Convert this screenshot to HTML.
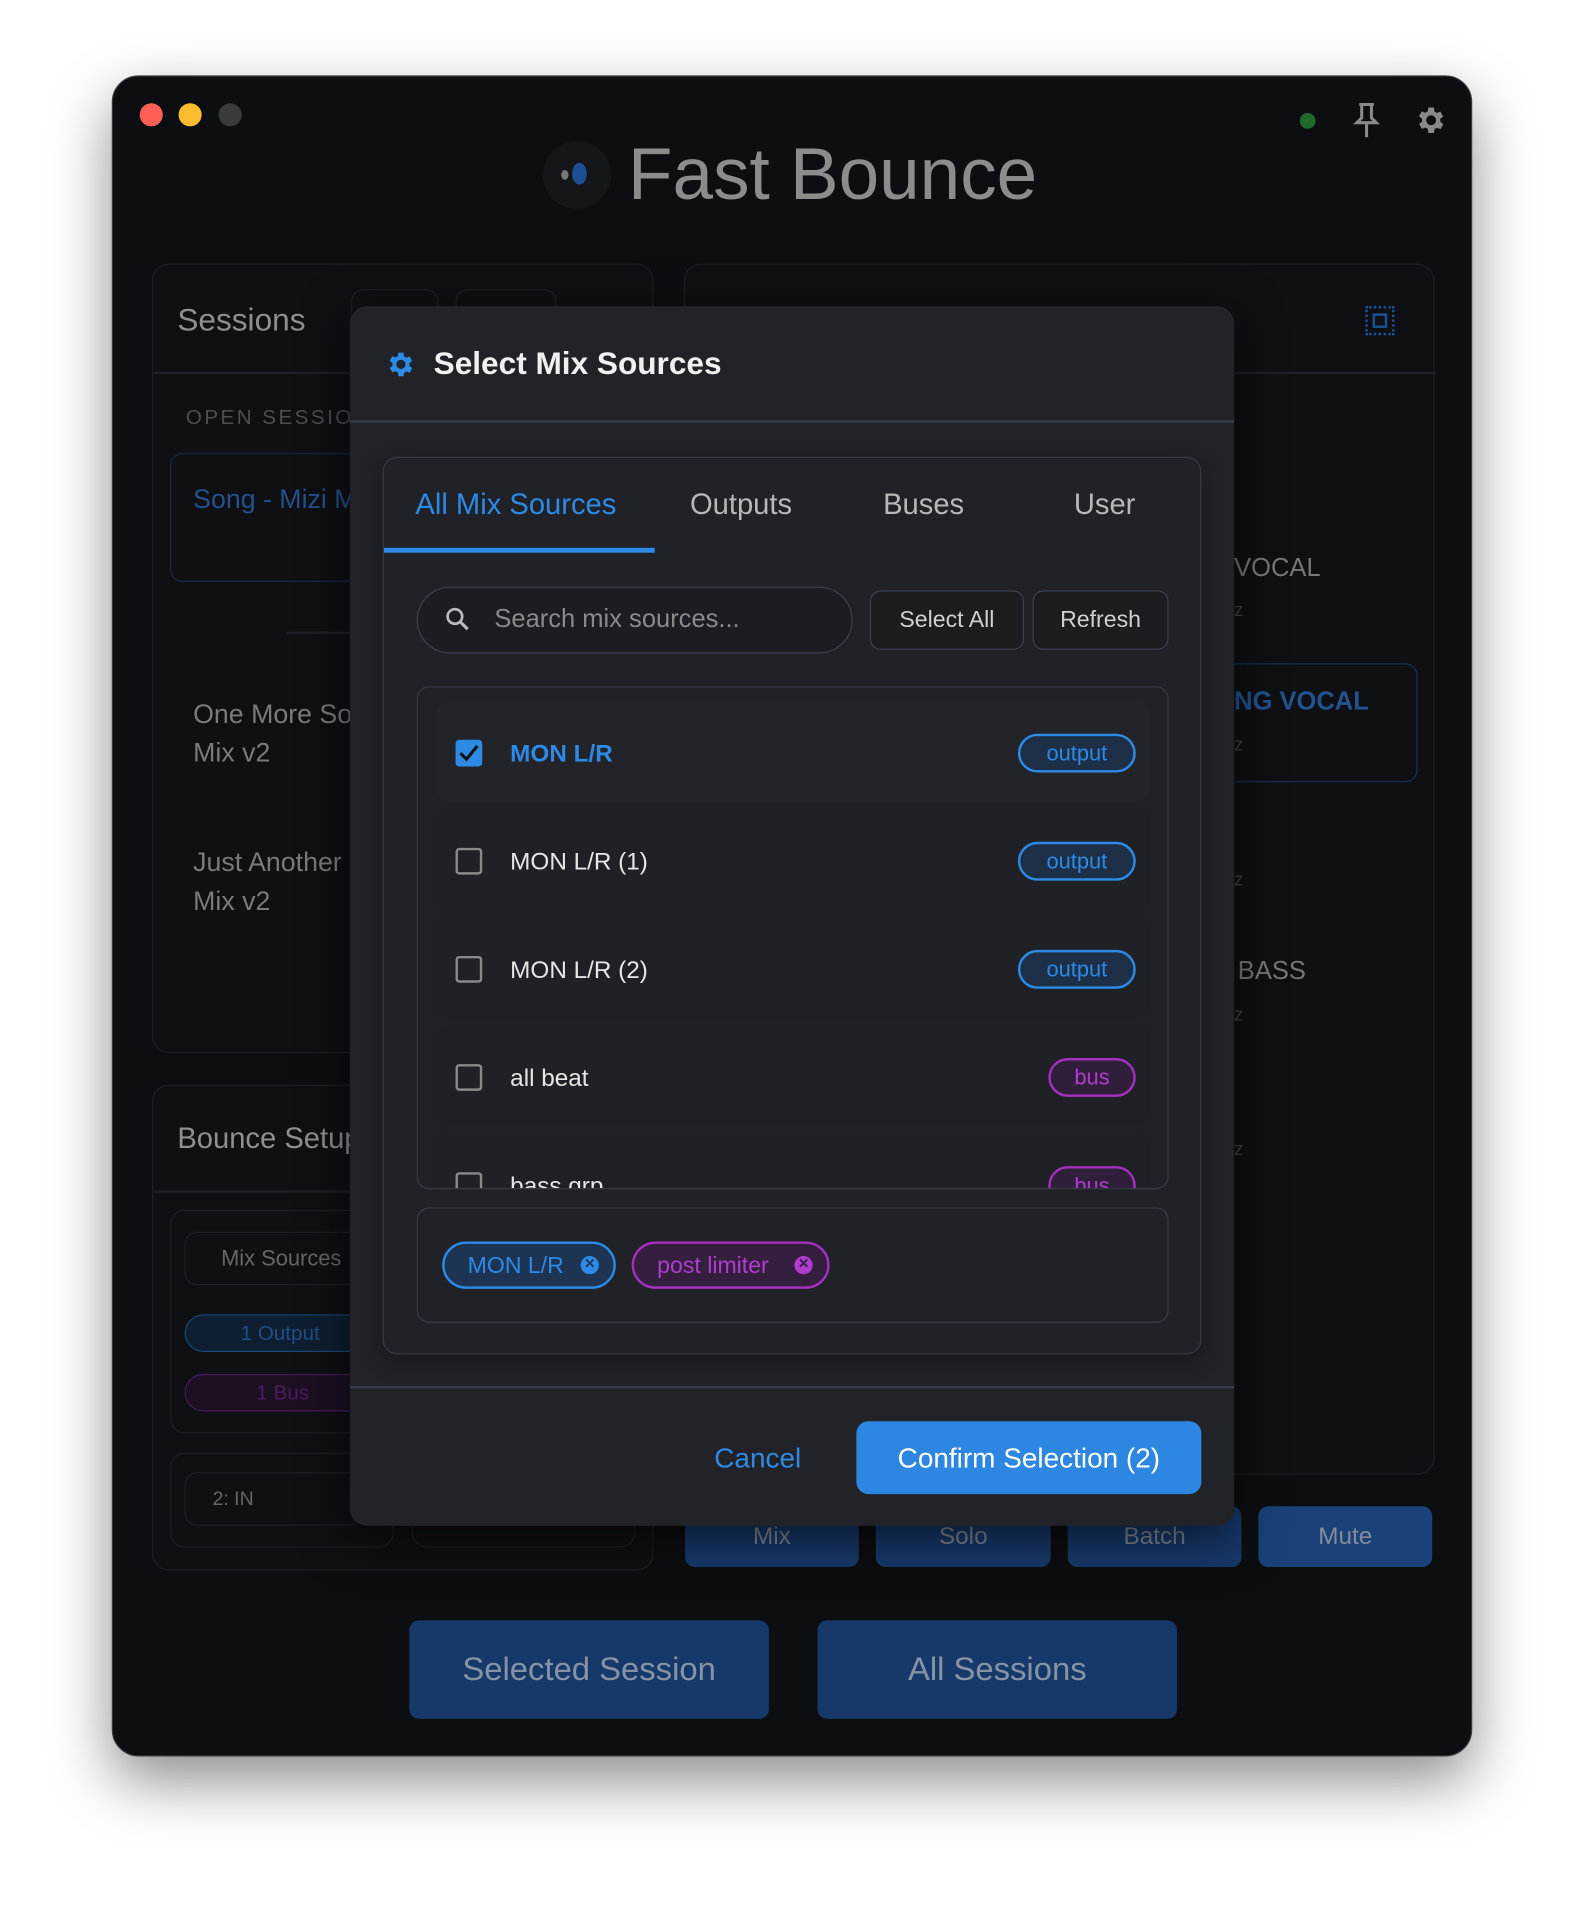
<!DOCTYPE html>
<html><head><meta charset="utf-8"><style>
*{box-sizing:border-box;margin:0;padding:0}
html,body{width:1584px;height:1904px;overflow:hidden;background:#fff;font-family:"Liberation Sans",sans-serif}
#w{position:absolute;left:0;top:0;width:1304px;height:1568px;transform:scale(1.21472);transform-origin:0 0;background:#fff}
.a{position:absolute}
.win{left:92px;top:62px;width:1120px;height:1384px;border-radius:22px;background:#0d0e11;border:1.5px solid #3a3a3c;box-shadow:0 20px 50px rgba(0,0,0,.45);overflow:hidden}
.dot{width:19px;height:19px;border-radius:50%}
.panel{border:1.5px solid #1d2026;border-radius:14px;background:#0f1014}
.t{color:#8a8a8a;white-space:nowrap}
.btn{background:#17396a;border-radius:8px;color:#7d8796;font-size:20px;display:flex;align-items:center;justify-content:center}
.modal{left:288px;top:252px;width:728px;height:1004px;background:#212329;border-radius:14px;box-shadow:0 10px 40px rgba(0,0,0,.6)}
.row{left:15px;width:588px;height:84px;background:#1f2126;border-radius:12px}
.cb{left:16px;width:22px;height:22px;border:2px solid #8a8a8a;border-radius:3px;top:33px}
.lbl{left:61px;top:34px;font-size:20px;color:#e6e6e6}
.pill{height:32px;border-radius:16px;font-size:18px;display:flex;align-items:center;justify-content:center;top:28px}
.out{border:2px solid #2d8ae6;color:#2d8ae6;background:#1e3048;width:97px;left:479px}
.bus{border:2px solid #a330c0;color:#b13cd0;background:#301f3a;width:72px;left:504px}
</style></head><body><div id="w">
<div class="a win">
 <div class="a dot" style="left:22px;top:22px;background:#fe5f57"></div>
 <div class="a dot" style="left:54px;top:22px;background:#febc2e"></div>
 <div class="a dot" style="left:87px;top:22px;background:#3a3b3d"></div>
 <div class="a dot" style="left:977px;top:30px;width:13px;height:13px;background:#1f6a2a"></div>
 <svg class="a" style="left:1020px;top:20px" width="24" height="32" viewBox="0 0 24 32"><path d="M6 3h12M8 3v11l-4 4h16l-4-4V3M12 18v12" stroke="#8a8a8a" stroke-width="2.5" fill="none"/></svg>
 <svg class="a" style="left:1070px;top:22px" width="28" height="28" viewBox="0 0 24 24"><path fill="#8a8a8a" d="M19.4 13a7.5 7.5 0 000-2l2.1-1.6-2-3.5-2.5 1a7 7 0 00-1.7-1L15 3h-4l-.4 2.7a7 7 0 00-1.7 1l-2.5-1-2 3.5L6.6 11a7.5 7.5 0 000 2l-2.1 1.6 2 3.5 2.5-1a7 7 0 001.7 1L11 21h4l.4-2.7a7 7 0 001.7-1l2.5 1 2-3.5zM13 15.5a3.5 3.5 0 110-7 3.5 3.5 0 010 7z"/></svg>
 <div class="a" style="left:354px;top:53px;width:56px;height:56px;border-radius:50%;background:#14161a"></div>
 <div class="a" style="left:378px;top:71px;width:12px;height:18px;border-radius:50%;background:#1d4f94"></div>
 <div class="a" style="left:369px;top:77px;width:6px;height:8px;border-radius:50%;background:#777"></div>
 <div class="a t" style="left:424px;top:46px;font-size:60px;color:#8c8c8c">Fast Bounce</div>

 <div class="a panel" style="left:32px;top:154px;width:413px;height:650px">
  <div class="a t" style="left:20px;top:30px;font-size:26px;color:#8f8f8f">Sessions</div>
  <div class="a" style="left:163px;top:20px;width:72px;height:60px;border:1.5px solid #1d2026;border-radius:10px"></div>
  <div class="a" style="left:249px;top:20px;width:83px;height:60px;border:1.5px solid #1d2026;border-radius:10px"></div>
  <div class="a" style="left:0;top:88px;width:413px;height:1.5px;background:#1d2026"></div>
  <div class="a t" style="left:27px;top:116px;font-size:17px;letter-spacing:2px;color:#4e4e52">OPEN SESSIONS</div>
  <div class="a" style="left:14px;top:155px;width:390px;height:106px;border:1.5px solid #162a45;border-radius:10px"></div>
  <div class="a t" style="left:33px;top:180px;font-size:22px;color:#24518a">Song - Mizi Mix</div>
  <div class="a" style="left:110px;top:302px;width:100px;height:1.5px;background:#1d2026"></div>
  <div class="a t" style="left:33px;top:354px;font-size:22px;line-height:32px;color:#7a7a7a">One More Song<br>Mix v2</div>
  <div class="a t" style="left:33px;top:476px;font-size:22px;line-height:32px;color:#7a7a7a">Just Another<br>Mix v2</div>
 </div>
 <div class="a panel" style="left:32px;top:830px;width:413px;height:400px">
  <div class="a t" style="left:20px;top:30px;font-size:24px;color:#8f8f8f">Bounce Setup</div>
  <div class="a" style="left:0;top:86px;width:413px;height:1.5px;background:#1d2026"></div>
  <div class="a" style="left:14px;top:102px;width:384px;height:184px;border:1.5px solid #1d2026;border-radius:12px"></div>
  <div class="a" style="left:26px;top:120px;width:180px;height:44px;border:1.5px solid #1d2026;border-radius:10px;color:#666;font-size:18px;padding:11px 0 0 29px">Mix Sources</div>
  <div class="a" style="left:26px;top:188px;width:180px;height:31px;border:1.5px solid #1b4878;border-radius:16px;background:#0f1e30;color:#1d4f85;font-size:17px;padding:5px 0 0 45px">1 Output</div>
  <div class="a" style="left:26px;top:237px;width:180px;height:31px;border:1.5px solid #4a1a5c;border-radius:16px;background:#1c1022;color:#4c1d5c;font-size:17px;padding:5px 0 0 58px">1 Bus</div>
  <div class="a" style="left:14px;top:302px;width:184px;height:78px;border:1.5px solid #1d2026;border-radius:12px"></div>
  <div class="a" style="left:213px;top:302px;width:184px;height:78px;border:1.5px solid #1d2026;border-radius:12px"></div>
  <div class="a" style="left:26px;top:318px;width:145px;height:44px;border:1.5px solid #1d2026;border-radius:10px;color:#666;font-size:16px;padding:13px 0 0 22px">2: IN</div>
 </div>
 <div class="a panel" style="left:470px;top:154px;width:618px;height:997px">
  <div class="a" style="left:0;top:88px;width:618px;height:1.5px;background:#1d2026"></div>
  <div class="a" style="left:560px;top:34px;width:24px;height:24px;border:2px dotted #1d4f94"></div>
  <div class="a" style="left:566px;top:40px;width:12px;height:12px;border:2px solid #1d4f94"></div>
  <div class="a t" style="left:452px;top:238px;font-size:21px;color:#777">VOCAL</div>
  <div class="a t" style="left:452px;top:276px;font-size:15px;color:#444">z</div>
  <div class="a" style="left:438px;top:328px;width:165px;height:98px;border:1.5px solid #163155;border-radius:10px"></div>
  <div class="a t" style="left:452px;top:348px;font-size:21px;color:#23528c;font-weight:bold">NG VOCAL</div>
  <div class="a t" style="left:452px;top:387px;font-size:15px;color:#444">z</div>
  <div class="a t" style="left:452px;top:498px;font-size:15px;color:#444">z</div>
  <div class="a t" style="left:455px;top:570px;font-size:21px;color:#777">BASS</div>
  <div class="a t" style="left:452px;top:609px;font-size:15px;color:#444">z</div>
  <div class="a t" style="left:452px;top:720px;font-size:15px;color:#444">z</div>
 </div>
 <div class="a btn" style="left:471px;top:1177px;width:143px;height:50px">Mix</div>
 <div class="a btn" style="left:628px;top:1177px;width:144px;height:50px">Solo</div>
 <div class="a btn" style="left:786px;top:1177px;width:143px;height:50px">Batch</div>
 <div class="a btn" style="left:943px;top:1177px;width:143px;height:50px;background:#1a4278;color:#838c9a">Mute</div>
 <div class="a btn" style="left:244px;top:1271px;width:296px;height:81px;font-size:27px;color:#8593a6">Selected Session</div>
 <div class="a btn" style="left:580px;top:1271px;width:296px;height:81px;font-size:27px;color:#8593a6">All Sessions</div>
</div>

<div class="a modal">
 <svg class="a" style="left:28px;top:35px" width="26" height="26" viewBox="0 0 24 24"><path fill="#2d8ae6" d="M19.4 13a7.5 7.5 0 000-2l2.1-1.6-2-3.5-2.5 1a7 7 0 00-1.7-1L15 3h-4l-.4 2.7a7 7 0 00-1.7 1l-2.5-1-2 3.5L6.6 11a7.5 7.5 0 000 2l-2.1 1.6 2 3.5 2.5-1a7 7 0 001.7 1L11 21h4l.4-2.7a7 7 0 001.7-1l2.5 1 2-3.5zM13 15.5a3.5 3.5 0 110-7 3.5 3.5 0 010 7z"/></svg>
 <div class="a" style="left:69px;top:32px;font-size:26px;color:#f0f0f0;font-weight:bold;white-space:nowrap">Select Mix Sources</div>
 <div class="a" style="left:0;top:94px;width:728px;height:2px;background:#353c4a"></div>
 <div class="a" style="left:27px;top:124px;width:674px;height:739px;border:1.5px solid #363b46;border-radius:12px;background:#202227;box-shadow:0 6px 16px rgba(0,0,0,.35);overflow:hidden">
  <div class="a" style="left:26px;top:25px;font-size:24px;color:#2d8ae6;white-space:nowrap">All Mix Sources</div>
  <div class="a" style="left:252px;top:25px;font-size:24px;color:#b8b8b8">Outputs</div>
  <div class="a" style="left:411px;top:25px;font-size:24px;color:#b8b8b8">Buses</div>
  <div class="a" style="left:568px;top:25px;font-size:24px;color:#b8b8b8">User</div>
  <div class="a" style="left:0;top:74px;width:223px;height:4px;background:#2d8ae6"></div>
  <div class="a" style="left:27px;top:106px;width:359px;height:55px;border:1.5px solid #3a4150;border-radius:28px;background:#1b1d23"></div>
  <svg class="a" style="left:50px;top:122px" width="22" height="22" viewBox="0 0 22 22"><circle cx="8.5" cy="8.5" r="6" stroke="#bbb" stroke-width="2.2" fill="none"/><path d="M13 13l6 6" stroke="#bbb" stroke-width="2.6"/></svg>
  <div class="a" style="left:91px;top:121px;font-size:21px;color:#8a8a8a;white-space:nowrap">Search mix sources...</div>
  <div class="a" style="left:400px;top:109px;width:127px;height:49px;border:1.5px solid #3a4150;border-radius:9px;background:#1c1d21;color:#d0d0d0;font-size:19px;text-align:center;padding-top:13px">Select All</div>
  <div class="a" style="left:534px;top:109px;width:112px;height:49px;border:1.5px solid #3a4150;border-radius:9px;background:#1c1d21;color:#d0d0d0;font-size:19px;text-align:center;padding-top:13px">Refresh</div>
  <div class="a" style="left:27px;top:188px;width:619px;height:414px;border:1.5px solid #363b46;border-radius:10px;overflow:hidden">
   <div class="a row" style="top:10px;background:#222429">
    <div class="a cb" style="background:#2d8ae6;border-color:#2d8ae6"></div>
    <svg class="a" style="left:18px;top:35px" width="18" height="18" viewBox="0 0 18 18"><path d="M2 9l5 5 9-11" stroke="#111" stroke-width="2.6" fill="none"/></svg>
    <div class="a lbl" style="color:#2d8ae6;font-weight:bold">MON L/R</div>
    <div class="a pill out">output</div>
   </div>
   <div class="a row" style="top:99px"><div class="a cb"></div><div class="a lbl">MON L/R (1)</div><div class="a pill out">output</div></div>
   <div class="a row" style="top:188px"><div class="a cb"></div><div class="a lbl">MON L/R (2)</div><div class="a pill out">output</div></div>
   <div class="a row" style="top:277px"><div class="a cb"></div><div class="a lbl">all beat</div><div class="a pill bus">bus</div></div>
   <div class="a row" style="top:366px"><div class="a cb"></div><div class="a lbl">bass grp</div><div class="a pill bus">bus</div></div>
  </div>
  <div class="a" style="left:27px;top:617px;width:619px;height:95px;border:1.5px solid #363b46;border-radius:10px">
   <div class="a" style="left:20px;top:27px;width:143px;height:39px;border:2px solid #2d8ae6;border-radius:20px;background:#1d3552;color:#2d8ae6;font-size:19px;padding:8px 0 0 19px">MON L/R</div>
   <div class="a" style="left:134px;top:39px;width:15px;height:15px;border-radius:50%;background:#2d8ae6;color:#1d3552;font-size:11px;text-align:center;line-height:15px;font-weight:bold">✕</div>
   <div class="a" style="left:176px;top:27px;width:163px;height:39px;border:2px solid #a330c0;border-radius:20px;background:#341f3e;color:#b13cd0;font-size:19px;padding:8px 0 0 19px;white-space:nowrap">post limiter</div>
   <div class="a" style="left:310px;top:39px;width:15px;height:15px;border-radius:50%;background:#b13cd0;color:#341f3e;font-size:11px;text-align:center;line-height:15px;font-weight:bold">✕</div>
  </div>
 </div>
 <div class="a" style="left:0;top:889px;width:728px;height:2px;background:#353c4a"></div>
 <div class="a" style="left:300px;top:935px;font-size:23px;color:#2d8ae6">Cancel</div>
 <div class="a" style="left:417px;top:918px;width:284px;height:60px;border-radius:10px;background:#2d87e2;color:#fff;font-size:23px;text-align:center;padding-top:17px">Confirm Selection (2)</div>
</div>
</div></body></html>
